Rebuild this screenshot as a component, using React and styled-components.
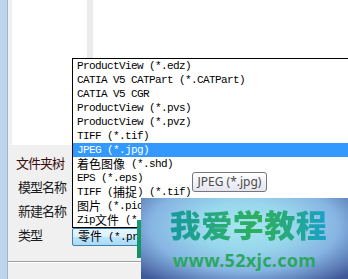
import styled, { createGlobalStyle } from "styled-components";

const GlobalStyle = createGlobalStyle`
  html, body {
    margin: 0;
    padding: 0;
    background: #f0f0f0;
  }
  body {
    font-family: "Noto Sans CJK SC", sans-serif;
  }
`;

const fileTypes = [
  "ProductView (*.edz)",
  "CATIA V5 CATPart (*.CATPart)",
  "CATIA V5 CGR",
  "ProductView (*.pvs)",
  "ProductView (*.pvz)",
  "TIFF (*.tif)",
  "JPEG (*.jpg)",
  "着色图像 (*.shd)",
  "EPS (*.eps)",
  "TIFF (捕捉) (*.tif)",
  "图片 (*.pic)",
  "Zip文件 (*.zip)",
];

const labels = ["文件夹树", "模型名称", "新建名称"];

// CJK runs get their own font, like SimSun does in the real dialog
const splitHan = (text) =>
  text
    .split(/([\u3400-\u9fff]+)/)
    .map((part, i) => (i % 2 ? <Han key={i}>{part}</Han> : part));

function App() {
  return (
    <>
      <GlobalStyle />
      <Screen>
        <SideStrip />
        <Main>
          <TopPane>
            <Gutter />
            <TreePanel />
            <Splitter />
            <Preview />
          </TopPane>
          <Form>
            {labels.map((l, i) => (
              <Row key={l}>
                <Label $dark={i === 0} $indent={i === 0 ? 8 : 10}>
                  {l}
                </Label>
              </Row>
            ))}
            <Row>
              <Label $indent={10}>类型</Label>
              <Combo>
                <Han>零件</Han> (*.prt)
              </Combo>
            </Row>
          </Form>
          <Separator />
        </Main>

        <ListBox>
          {fileTypes.map((t) => (
            <Option key={t} $selected={t.startsWith("JPEG")}>
              {splitHan(t)}
            </Option>
          ))}
        </ListBox>
        <GreenEdge />
        <Tooltip>JPEG (*.jpg)</Tooltip>
        <Watermark>
          <Brand>我爱学教程</Brand>
          <Site>www.52xjc.com</Site>
        </Watermark>
      </Screen>
    </>
  );
}

const Screen = styled.div`
  position: relative;
  width: 348px;
  height: 279px;
  overflow: hidden;
  display: flex;
  background: #f0f0f0;
`;

const SideStrip = styled.div`
  width: 7px;
  flex-shrink: 0;
  background: #bcd5ec;
  border-right: 1px solid #9db6ce;
`;

const Main = styled.div`
  flex: 1;
  display: flex;
  flex-direction: column;
`;

const TopPane = styled.div`
  height: 145px;
  display: flex;
`;

const Gutter = styled.div`
  width: 4px;
  background: #f0f0f0;
`;

const TreePanel = styled.div`
  width: 75px;
  background: #fff;
`;

const Splitter = styled.div`
  width: 6px;
  background: #ebebeb;
`;

const Preview = styled.div`
  flex: 1;
  background: #fff;
`;

const Form = styled.div`
  padding-top: 6px;
  display: flex;
  flex-direction: column;
`;

const Row = styled.div`
  height: 24px;
  display: flex;
  align-items: center;
`;

const Label = styled.span`
  width: ${(p) => 64 - p.$indent}px;
  padding-left: ${(p) => p.$indent}px;
  font-size: 13px;
  letter-spacing: -1px;
  line-height: 14px;
  white-space: nowrap;
  color: ${(p) => (p.$dark ? "#3a0c0c" : "#1a1a1a")};
`;

const Combo = styled.div`
  width: 90px;
  height: 16px;
  margin-top: 4px;
  padding-left: 5px;
  border: 1px solid #3c7fb1;
  border-radius: 2px;
  background: linear-gradient(#eaf6fd 0%, #d9f0fc 50%, #bee6fd 51%, #a7d9f5 100%);
  font-family: "Liberation Mono", monospace;
  font-size: 11px;
  letter-spacing: -0.6px;
  line-height: 16px;
  white-space: nowrap;
  overflow: hidden;
  color: #000;
`;

const Separator = styled.div`
  margin-top: 14px;
  height: 0;
  border-top: 1px solid #a0a0a0;
  border-bottom: 1px solid #fff;
`;

const ListBox = styled.ul`
  position: absolute;
  left: 72px;
  top: 58px;
  width: 300px;
  margin: 0;
  padding: 0;
  list-style: none;
  background: #fff;
  border: 1px solid #000;
  font-family: "Liberation Mono", monospace;
  font-size: 11px;
  letter-spacing: -0.6px;
  color: #000;
`;

const Option = styled.li`
  height: 14px;
  line-height: 14px;
  padding-left: 4px;
  white-space: nowrap;
  overflow: hidden;
  color: ${(p) => (p.$selected ? "#fff" : "#000")};
  background: ${(p) => (p.$selected ? "#3399ff" : "transparent")};
`;

const Han = styled.span`
  font-family: "Noto Sans CJK SC", sans-serif;
  font-size: 12px;
  letter-spacing: 0;
  line-height: 14px;
  vertical-align: top;
`;

const GreenEdge = styled.div`
  position: absolute;
  left: 137px;
  top: 220px;
  width: 5px;
  height: 38px;
  background: linear-gradient(#1a9a70, #12905e);
`;

const Tooltip = styled.div`
  position: absolute;
  left: 192px;
  top: 172px;
  width: 73px;
  height: 18px;
  border: 1px solid #767676;
  border-radius: 3px;
  background: linear-gradient(#ffffff, #e4e5f0);
  font-family: "Noto Sans", sans-serif;
  font-size: 12px;
  line-height: 17px;
  text-align: center;
  color: #4c4c4c;
  white-space: nowrap;
`;

const Watermark = styled.div`
  position: absolute;
  left: 141px;
  top: 198px;
  width: 207px;
  height: 81px;
  display: flex;
  flex-direction: column;
  align-items: center;
  background: radial-gradient(
    ellipse 70% 85% at 50% 35%,
    #a6e6ef 0%,
    #98d6ec 35%,
    #86b4e2 65%,
    #5674b0 90%,
    #3e5898 100%
  );
`;

const Brand = styled.div`
  margin-top: 9px;
  padding-left: 8px;
  font-size: 31px;
  font-weight: 900;
  line-height: 34px;
  letter-spacing: 0.5px;
  background: linear-gradient(90deg, #1496a4 0%, #28aa7a 35%, #2eaf5c 60%, #22a88a 80%, #1aa0c8 100%);
  -webkit-background-clip: text;
  background-clip: text;
  color: transparent;
`;

const Site = styled.div`
  margin-top: 9px;
  font-family: "Noto Sans", sans-serif;
  font-size: 18px;
  font-weight: 700;
  line-height: 20px;
  color: #2aa860;
  letter-spacing: 0.3px;
`;

export default App;
